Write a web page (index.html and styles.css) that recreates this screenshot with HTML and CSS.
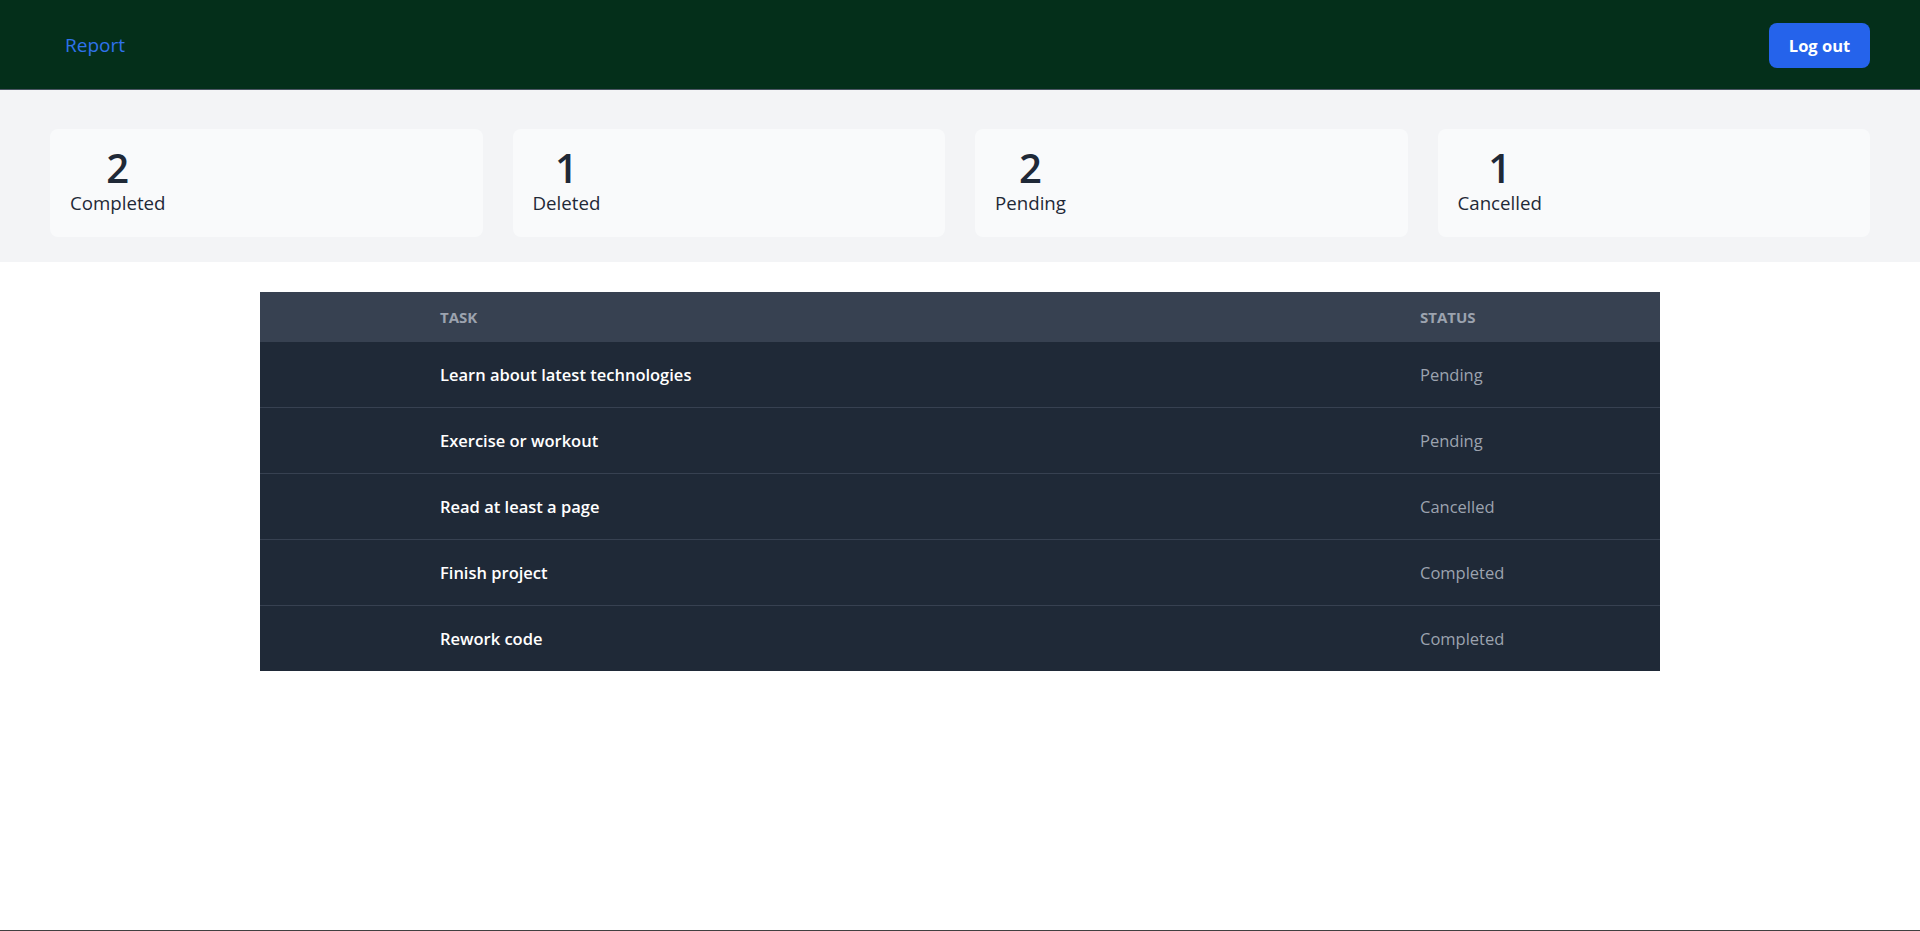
FILE: index.html
```html
<!DOCTYPE html>
<html lang="en">
<head>
<meta charset="utf-8">
<title>Report</title>
<link rel="stylesheet" href="styles.css">
</head>
<body>
<div class="page">
  <header class="topbar">
    <nav class="nav">
      <a class="nav-link" href="#">Report</a>
    </nav>
    <button class="logout" type="button">Log out</button>
  </header>

  <section class="stats">
    <div class="stat-card">
      <div class="stat"><span class="stat-num">2</span><span class="stat-label">Completed</span></div>
    </div>
    <div class="stat-card">
      <div class="stat"><span class="stat-num">1</span><span class="stat-label">Deleted</span></div>
    </div>
    <div class="stat-card">
      <div class="stat"><span class="stat-num">2</span><span class="stat-label">Pending</span></div>
    </div>
    <div class="stat-card">
      <div class="stat"><span class="stat-num">1</span><span class="stat-label">Cancelled</span></div>
    </div>
  </section>

  <main class="content">
    <table class="tasks">
      <colgroup>
        <col class="col-idx">
        <col class="col-task">
        <col class="col-status">
      </colgroup>
      <thead>
        <tr><th></th><th>Task</th><th>Status</th></tr>
      </thead>
      <tbody>
        <tr><td></td><td class="task">Learn about latest technologies</td><td class="status">Pending</td></tr>
        <tr><td></td><td class="task">Exercise or workout</td><td class="status">Pending</td></tr>
        <tr><td></td><td class="task">Read at least a page</td><td class="status">Cancelled</td></tr>
        <tr><td></td><td class="task">Finish project</td><td class="status">Completed</td></tr>
        <tr><td></td><td class="task">Rework code</td><td class="status">Completed</td></tr>
      </tbody>
    </table>
  </main>
</div>
</body>
</html>
```

FILE: styles.css
```css
* {
  box-sizing: border-box;
}

html, body {
  margin: 0;
  padding: 0;
  background: #ffffff;
  font-family: "Open Sans", "Noto Sans", "Liberation Sans", sans-serif;
}

.page {
  min-height: 100vh;
  display: flex;
  flex-direction: column;
  border-bottom: 1px solid #404040;
}

.topbar {
  height: 90px;
  background: #042f1a;
  border-bottom: 1px solid #4b5563;
  display: flex;
  align-items: center;
  justify-content: space-between;
  padding: 0 50px;
}

.nav {
  display: flex;
}

.nav-link {
  color: #2f72ea;
  text-decoration: none;
  font-size: 19px;
  line-height: 28px;
  padding: 0 15px;
  margin-top: 1px;
}

.logout {
  background: #2563eb;
  color: #ffffff;
  border: none;
  border-radius: 8px;
  font-family: inherit;
  font-size: 16.5px;
  font-weight: 700;
  line-height: 25px;
  width: 101px;
  height: 45px;
  padding: 0;
  margin-top: 1px;
  cursor: pointer;
}

.stats {
  background: #f3f4f6;
  padding: 39px 50px 25px;
  display: grid;
  grid-template-columns: repeat(4, 1fr);
  gap: 30px;
}

.stat-card {
  background: #f9fafb;
  border-radius: 8px;
  height: 108px;
  padding: 20px 20px;
}

.stat {
  display: inline-flex;
  flex-direction: column;
  align-items: center;
  color: #1f2937;
}

.stat-num {
  font-size: 40px;
  line-height: 38px;
  font-weight: 600;
  margin-bottom: 2px;
}

.stat-label {
  font-size: 18.7px;
  line-height: 28px;
}

.content {
  padding-top: 30px;
  display: flex;
  justify-content: center;
}

.tasks {
  width: 1400px;
  table-layout: fixed;
  border-collapse: separate;
  border-spacing: 0;
  background: #1f2937;
}

.col-idx { width: 180px; }
.col-task { width: 980px; }
.col-status { width: 240px; }

.tasks th {
  box-sizing: content-box;
  background: #374151;
  color: #9ca3af;
  text-align: left;
  text-transform: uppercase;
  font-size: 15px;
  font-weight: 700;
  height: 50px;
  padding: 0;
  vertical-align: middle;
}

.tasks td {
  box-sizing: content-box;
  background: #1f2937;
  height: 65px;
  padding: 0;
  vertical-align: middle;
}

.tasks tbody tr + tr td {
  border-top: 1px solid #374151;
}

.task {
  color: #ffffff;
  font-weight: 600;
  font-size: 16.5px;
}

.status {
  color: #9ca3af;
  font-size: 16.5px;
}
```
